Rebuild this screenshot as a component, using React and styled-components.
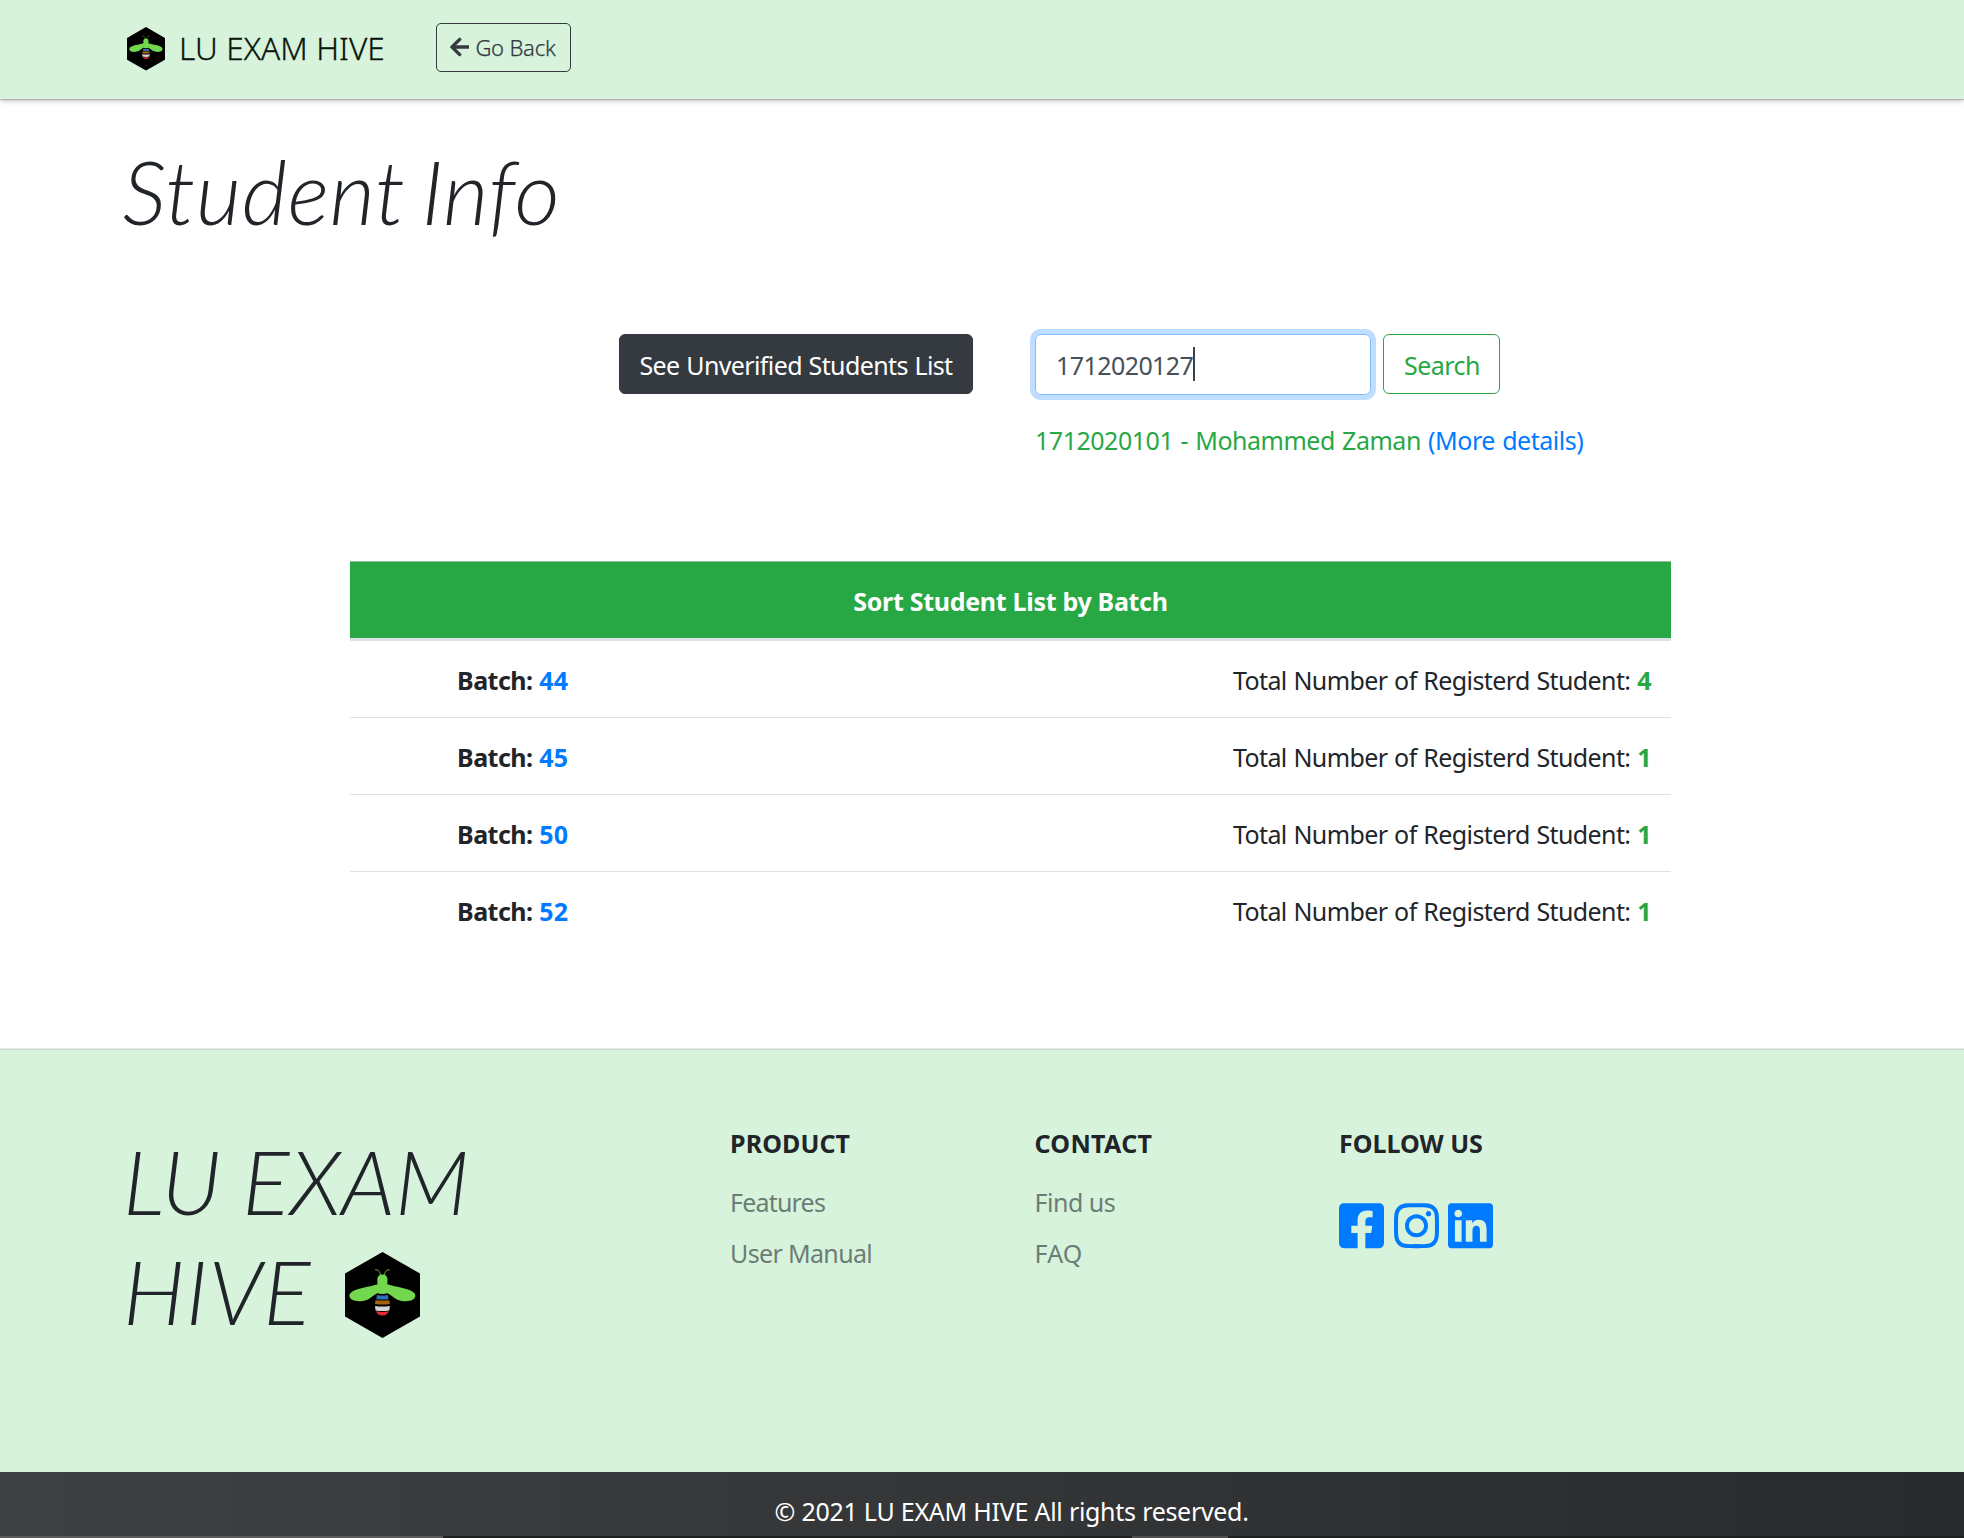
import React from "react";
import styled, { createGlobalStyle } from "styled-components";
import { FaArrowLeft, FaFacebookSquare, FaInstagram, FaLinkedin } from "react-icons/fa";

const GlobalStyle = createGlobalStyle`
  *, *::before, *::after { box-sizing: border-box; }
  body {
    margin: 0;
    background: #fff;
    color: #212529;
    font-family: "Noto Sans", "Open Sans", sans-serif;
    font-size: 25px;
    font-weight: 400;
  }
  a { text-decoration: none; }
`;

const Page = styled.div`
  display: flex;
  flex-direction: column;
  height: 1538px;
  overflow: hidden;
`;

const Text = styled.span`
  letter-spacing: ${(p) => p.$spacing || 0}px;
  word-spacing: ${(p) => p.$words || 0}px;
  white-space: nowrap;
`;

const Navbar = styled.nav`
  display: flex;
  align-items: center;
  flex: none;
  height: 99px;
  padding: 0 127px 4px;
  background: #d7f3dc;
  box-shadow: 0 1px 1px rgba(0, 0, 0, 0.18), 0 2px 5px rgba(0, 0, 0, 0.22);
`;

const Brand = styled.a`
  display: flex;
  align-items: center;
  gap: 14px;
  height: 88px;
  margin-top: 3px;
  color: #0b150d;
  font-size: 31.5px;
  font-weight: 300;
  line-height: 44px;
  -webkit-text-stroke: 0.3px #0b150d;
  ${Text} { margin-top: -2px; }
`;

const BeeSvg = styled.svg`
  display: block;
  flex: none;
  width: ${(p) => p.$width}px;
  height: ${(p) => p.$height}px;
`;

const BackButton = styled.button`
  display: flex;
  align-items: center;
  gap: 6px;
  width: 135px;
  height: 49px;
  margin: 0 0 0 51px;
  padding: 0 0 1px 13px;
  border: 1px solid #343a40;
  border-radius: 5px;
  background: transparent;
  color: #343a40;
  font-family: inherit;
  font-size: 22px;
  font-weight: 300;
  -webkit-text-stroke: 0.25px #343a40;
  svg { width: 19.5px; height: 22px; }
`;

const Main = styled.main`
  flex: none;
  height: 949px;
  padding-top: 39px;
`;

const Title = styled.h1`
  margin: 0 0 0 122.5px;
  font: italic 300 88.2px/106px Lato, sans-serif;
`;

const SearchArea = styled.section`
  display: flex;
  gap: 62px;
  height: 126px;
  margin: 90px 0 0 619px;
`;

const DarkButton = styled.button`
  width: 354px;
  height: 60px;
  padding: 2px 0 0;
  border: 1px solid #343a40;
  border-radius: 6px;
  background: #343a40;
  color: #fff;
  font: inherit;
`;

const SearchForm = styled.div`
  display: flex;
  gap: 12px;
`;

const SearchField = styled.div`
  display: flex;
  align-items: center;
  width: 336px;
  height: 61px;
  padding-left: 20px;
  border: 1px solid #80bdff;
  border-radius: 6px;
  box-shadow: 0 0 0 5px #bfdeff;
  color: #495057;
`;

const Caret = styled.i`
  width: 2px;
  height: 34px;
  margin-bottom: 1px;
  background: #38424c;
`;

const SearchButton = styled.button`
  width: 117px;
  height: 60px;
  padding: 2px 0 0 1px;
  border: 1px solid #28a745;
  border-radius: 6px;
  background: #fff;
  color: #28a745;
  font: inherit;
`;

const Result = styled.p`
  margin: 25px 0 0;
  line-height: 40px;
  white-space: nowrap;
  letter-spacing: -0.48px;
  word-spacing: 1.2px;
  color: #28a745;
`;

const Link = styled.a`
  color: #007bff;
`;

const BatchTable = styled.section`
  width: 1321px;
  margin: 101px 0 0 350px;
`;

const TableHeader = styled.header`
  height: 80px;
  padding-top: 2px;
  border-top: 1px solid #94bd9d;
  border-bottom: 3px solid #dee2e6;
  background: #28a745;
  color: #fff;
  font-weight: 700;
  line-height: 75px;
  text-align: center;
`;

const BatchRow = styled.div`
  display: flex;
  justify-content: space-between;
  padding: 2px 19.5px 0 107px;
  line-height: 74px;
  & + & { border-top: 1px solid #dee2e6; }
`;

const BatchName = styled.strong`
  font-weight: 700;
`;

const Count = styled.b`
  color: #28a745;
  font-weight: 700;
`;

const Footer = styled.footer`
  display: grid;
  grid-template-columns: 608px 304.5px 304.5px 1fr;
  flex: none;
  height: 424px;
  padding-left: 123px;
  border-top: 1px solid #e9ebe9;
  box-shadow: inset 0 1px 0 #ccd6ce;
  background: #d7f3dc;
`;

const FooterBrand = styled.div`
  padding-top: 77px;
  font: italic 300 88.2px/110px Lato, sans-serif;
`;

const BrandLine = styled.div`
  display: flex;
  align-items: center;
  gap: 33px;
  height: 110px;
  svg { margin-top: 8px; }
`;

const FooterColumn = styled.div`
  display: flex;
  flex-direction: column;
  align-items: flex-start;
  padding-top: 69px;
`;

const ColumnTitle = styled.h5`
  margin: 0 0 8px -1px;
  font-size: 25px;
  font-weight: 700;
  line-height: 51px;
`;

const FooterLink = styled.a`
  margin-left: -1px;
  color: #6c7d76;
  line-height: 51px;
`;

const SocialLinks = styled.div`
  display: flex;
  gap: 9.6px;
  margin: 23px 0 0 -1px;
  color: #007bff;
  svg { width: 45px; height: 51.4px; }
`;

const Copyright = styled.div`
  flex: none;
  height: 64px;
  padding: 0 0 0 59px;
  background: linear-gradient(90deg, #3f4042, #292a2b);
  color: #fff;
  line-height: 79px;
  text-align: center;
`;

const BottomStrip = styled.div`
  display: grid;
  grid-template-columns: 443px 689px 96px 1fr;
  height: 2px;
  background: #202121;
`;

const StripSegment = styled.div`
  grid-column: ${(p) => p.$column};
  background: ${(p) => p.$color};
`;

function BeeLogo({ width, height }) {
  return (
    <BeeSvg $width={width} $height={height} viewBox="0 0 75 86">
      <path d="M37.5 0 75 21.5v43L37.5 86 0 64.5v-43z" fill="#000" />
      <g fill="none" stroke="#68b83e" strokeWidth="0.9">
        <path d="M35.8 24 34.6 20.2Q33.5 17.5 30 17.6" />
        <path d="M39 24 40.2 20.2Q41.3 17.5 44.8 17.6" />
      </g>
      <path
        fill="#73d84d"
        d="M32.3 27.5C32.3 24.5 34.3 22.5 37.4 22.5s5.1 2 5.1 5L42.3 32.3C51 35.5 65 36 69.5 41.2c1.6 2.2.8 5.1-2 6.6-4.5 2.4-12 1.5-16.5-.9-3-1.6-5.3-4.3-8.5-5.7Q37.4 42.6 32.3 41.2c-3.2 1.4-5.5 4.1-8.5 5.7-4.5 2.4-12 3.3-16.5.9-2.8-1.5-3.6-4.4-2-6.6C9.8 36 23.8 35.5 32.5 32.3z"
      />
      <path d="M32 43q5.4 1 10.9 0l.7 4.2q-6.1.8-12.3 0z" fill="#2c72b8" />
      <path d="M30.5 48.2q7 .8 13.8 0l.6 3.8q-7.5 1.2-15 0z" fill="#a4630c" />
      <path d="M30 54q7.5 1.2 14.9 0l-.6 4.5q-6.9 1.2-13.7 0z" fill="#d5d5d5" />
      <path d="M31 59.3q6.5 1.2 12.9 0-1.7 4.2-6.5 4.2T31 59.3z" fill="#e52a36" />
    </BeeSvg>
  );
}

const batches = [
  { batch: 44, total: 4 },
  { batch: 45, total: 1 },
  { batch: 50, total: 1 },
  { batch: 52, total: 1 },
];

export default function App() {
  return (
    <Page>
      <GlobalStyle />
      <Navbar>
        <Brand>
          <BeeLogo width={38} height={43.5} />
          <Text $spacing={0.1}>LU EXAM HIVE</Text>
        </Brand>
        <BackButton>
          <FaArrowLeft />
          <Text $spacing={-0.2}>Go Back</Text>
        </BackButton>
      </Navbar>

      <Main>
        <Title>
          <Text $spacing={0.5} $words={-7}>Student Info</Text>
        </Title>
        <SearchArea>
          <DarkButton>
            <Text $spacing={-0.62} $words={0.8}>See Unverified Students List</Text>
          </DarkButton>
          <div>
            <SearchForm>
              <SearchField>
                <Text $spacing={-0.57}>1712020127</Text>
                <Caret />
              </SearchField>
              <SearchButton>
                <Text $spacing={-0.5}>Search</Text>
              </SearchButton>
            </SearchForm>
            <Result>
              1712020101 - Mohammed Zaman <Link>(More details)</Link>
            </Result>
          </div>
        </SearchArea>

        <BatchTable>
          <TableHeader>
            <Text $spacing={-0.3}>Sort Student List by Batch</Text>
          </TableHeader>
          {batches.map(({ batch, total }) => (
            <BatchRow key={batch}>
              <BatchName>
                <Text $spacing={-0.5} $words={0.5}>Batch: </Text>
                <Link>
                  <Text $spacing={0.3}>{batch}</Text>
                </Link>
              </BatchName>
              <div>
                <Text $spacing={-0.6} $words={0.8}>Total Number of Registerd Student: </Text>
                <Count>{total}</Count>
              </div>
            </BatchRow>
          ))}
        </BatchTable>
      </Main>

      <Footer>
        <FooterBrand>
          <BrandLine>
            <Text $spacing={0.1} $words={-1.5}>LU EXAM</Text>
          </BrandLine>
          <BrandLine>
            <Text $spacing={1}>HIVE</Text>
            <BeeLogo width={75} height={86} />
          </BrandLine>
        </FooterBrand>
        <FooterColumn>
          <ColumnTitle>
            <Text $spacing={0.1}>PRODUCT</Text>
          </ColumnTitle>
          <FooterLink>
            <Text $spacing={-0.8}>Features</Text>
          </FooterLink>
          <FooterLink>
            <Text $spacing={-0.65}>User Manual</Text>
          </FooterLink>
        </FooterColumn>
        <FooterColumn>
          <ColumnTitle>
            <Text $spacing={0.3}>CONTACT</Text>
          </ColumnTitle>
          <FooterLink>
            <Text $spacing={-0.5}>Find us</Text>
          </FooterLink>
          <FooterLink>
            <Text $spacing={0.2}>FAQ</Text>
          </FooterLink>
        </FooterColumn>
        <FooterColumn>
          <ColumnTitle>
            <Text $spacing={0}>FOLLOW US</Text>
          </ColumnTitle>
          <SocialLinks>
            <FaFacebookSquare />
            <FaInstagram />
            <FaLinkedin />
          </SocialLinks>
        </FooterColumn>
      </Footer>
      <Copyright>
        <Text $spacing={-0.31} $words={0.3}>© 2021 LU EXAM HIVE All rights reserved.</Text>
      </Copyright>
      <BottomStrip>
        <StripSegment $column={1} $color="#5a5a5a" />
        <StripSegment $column={3} $color="#505050" />
      </BottomStrip>
    </Page>
  );
}
